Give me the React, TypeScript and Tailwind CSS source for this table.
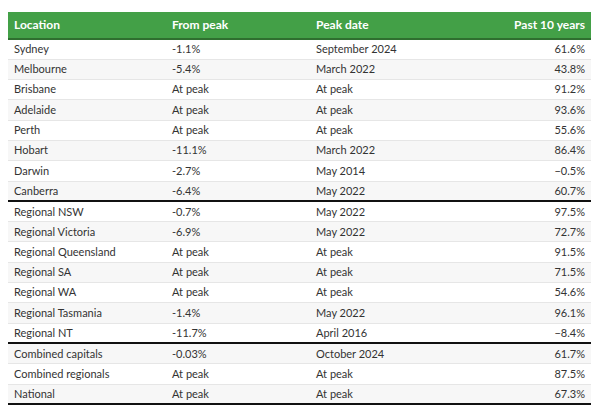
import React from 'react';

type Row = { loc: string; from: string; date: string; past: string };

const groups: Row[][] = [
  [
    { loc: 'Sydney', from: '-1.1%', date: 'September 2024', past: '61.6%' },
    { loc: 'Melbourne', from: '-5.4%', date: 'March 2022', past: '43.8%' },
    { loc: 'Brisbane', from: 'At peak', date: 'At peak', past: '91.2%' },
    { loc: 'Adelaide', from: 'At peak', date: 'At peak', past: '93.6%' },
    { loc: 'Perth', from: 'At peak', date: 'At peak', past: '55.6%' },
    { loc: 'Hobart', from: '-11.1%', date: 'March 2022', past: '86.4%' },
    { loc: 'Darwin', from: '-2.7%', date: 'May 2014', past: '\u22120.5%' },
    { loc: 'Canberra', from: '-6.4%', date: 'May 2022', past: '60.7%' },
  ],
  [
    { loc: 'Regional NSW', from: '-0.7%', date: 'May 2022', past: '97.5%' },
    { loc: 'Regional Victoria', from: '-6.9%', date: 'May 2022', past: '72.7%' },
    { loc: 'Regional Queensland', from: 'At peak', date: 'At peak', past: '91.5%' },
    { loc: 'Regional SA', from: 'At peak', date: 'At peak', past: '71.5%' },
    { loc: 'Regional WA', from: 'At peak', date: 'At peak', past: '54.6%' },
    { loc: 'Regional Tasmania', from: '-1.4%', date: 'May 2022', past: '96.1%' },
    { loc: 'Regional NT', from: '-11.7%', date: 'April 2016', past: '\u22128.4%' },
  ],
  [
    { loc: 'Combined capitals', from: '-0.03%', date: 'October 2024', past: '61.7%' },
    { loc: 'Combined regionals', from: 'At peak', date: 'At peak', past: '87.5%' },
    { loc: 'National', from: 'At peak', date: 'At peak', past: '67.3%' },
  ],
];

const App: React.FC = () => {
  let idx = 0;
  return <div className="bg-white w-[601px] h-[412px] pt-[12px] pl-[8px]" style={{ fontFamily: 'Lato, "Noto Sans", sans-serif' }}>
      <table className="w-[583px] border-collapse text-[11px] text-[#333]">
        <thead>
          <tr className="bg-[#43a047] text-white font-bold text-[12px] h-[27px] border-b-2 border-[#2f6f2f]">
            <th className="text-left pl-[6px] w-[158px]">Location</th>
            <th className="text-left pl-[6px] w-[144px]">From peak</th>
            <th className="text-left pl-[6px]">Peak date</th>
            <th className="text-right pr-[6px]">Past 10 years</th>
          </tr>
        </thead>
        <tbody>
          {groups.map((g, gi) => g.map((r, ri) => {
            const i = idx++;
            const last = ri === g.length - 1;
            return <tr key={r.loc} className={`h-[20.3px] ${i % 2 ? 'bg-[#f7f7f7]' : 'bg-white'} ${last ? 'border-b-2 border-[#111]' : 'border-b border-[#e6e6e6]'}`}>
                <td className="pl-[6px]">{r.loc}</td>
                <td className="pl-[6px]">{r.from}</td>
                <td className="pl-[6px]">{r.date}</td>
                <td className="text-right pr-[6px]">{r.past}</td>
              </tr>;
          }))}
        </tbody>
      </table>
    </div>;
};

export default App;
